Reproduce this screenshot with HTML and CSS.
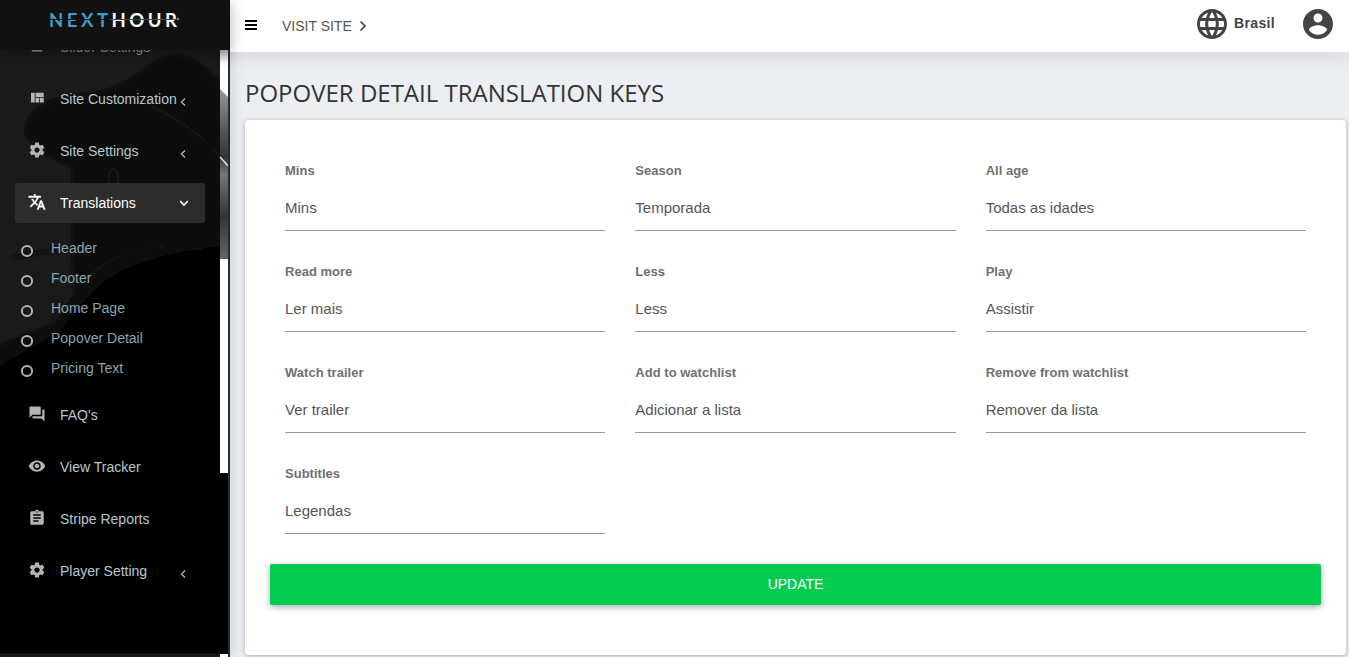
FILE: index.html
```html
<!DOCTYPE html>
<html lang="en">
<head>
<meta charset="utf-8">
<title>Popover Detail Translation Keys</title>
<link rel="stylesheet" href="styles.css">
</head>
<body>
<svg width="0" height="0" class="sprite">
  <symbol id="gear" viewBox="0 0 24 24"><path d="M19.43 12.98c.04-.32.07-.64.07-.98s-.03-.66-.07-.98l2.11-1.65c.19-.15.24-.42.12-.64l-2-3.46c-.12-.22-.39-.3-.61-.22l-2.49 1c-.52-.4-1.08-.73-1.69-.98l-.38-2.65C14.46 2.18 14.25 2 14 2h-4c-.25 0-.46.18-.49.42l-.38 2.65c-.61.25-1.17.59-1.69.98l-2.49-1c-.23-.09-.49 0-.61.22l-2 3.46c-.13.22-.07.49.12.64l2.11 1.65c-.04.32-.07.65-.07.98s.03.66.07.98l-2.11 1.65c-.19.15-.24.42-.12.64l2 3.46c.12.22.39.3.61.22l2.49-1c.52.4 1.08.73 1.69.98l.38 2.65c.03.24.24.42.49.42h4c.25 0 .46-.18.49-.42l.38-2.65c.61-.25 1.17-.59 1.69-.98l2.49 1c.23.09.49 0 .61-.22l2-3.46c.12-.22.07-.49-.12-.64l-2.11-1.65zM12 15.5c-1.93 0-3.5-1.57-3.5-3.5s1.57-3.5 3.5-3.5 3.5 1.57 3.5 3.5-1.57 3.5-3.5 3.5z"/></symbol>
  <symbol id="quilt" viewBox="0 0 24 24"><path d="M10 18h5v-6h-5v6zm-6 0h5V5H4v13zm12 0h5v-6h-5v6zM10 5v6h11V5H10z"/></symbol>
  <symbol id="translate" viewBox="0 0 24 24"><path d="M12.87 15.07l-2.54-2.51.03-.03c1.74-1.94 2.98-4.17 3.71-6.53H17V4h-7V2H8v2H1v1.99h11.17C11.5 7.92 10.44 9.75 9 11.35 8.07 10.32 7.3 9.19 6.69 8h-2c.73 1.63 1.73 3.17 2.98 4.56l-5.09 5.02L4 19l5-5 3.11 3.11.76-2.04zM18.5 10h-2L12 22h2l1.12-3h4.75L21 22h2l-4.5-12zm-2.62 7l1.62-4.33L19.12 17h-3.24z"/></symbol>
  <symbol id="forum" viewBox="0 0 24 24"><path d="M21 6h-2v9H6v2c0 .55.45 1 1 1h11l4 4V7c0-.55-.45-1-1-1zm-4 6V3c0-.55-.45-1-1-1H3c-.55 0-1 .45-1 1v14l4-4h10c.55 0 1-.45 1-1z"/></symbol>
  <symbol id="eye" viewBox="0 0 24 24"><path d="M12 4.5C7 4.5 2.73 7.61 1 12c1.73 4.39 6 7.5 11 7.5s9.27-3.11 11-7.5c-1.73-4.39-6-7.5-11-7.5zM12 17c-2.76 0-5-2.24-5-5s2.24-5 5-5 5 2.24 5 5-2.24 5-5 5zm0-8c-1.66 0-3 1.34-3 3s1.34 3 3 3 3-1.34 3-3-1.34-3-3-3z"/></symbol>
  <symbol id="clipboard" viewBox="0 0 24 24"><path d="M19 3h-4.180C14.400 1.840 13.300 1 12 1c-1.300 0-2.400.84-2.820 2H5c-1.100 0-2 .9-2 2v14c0 1.100.9 2 2 2h14c1.100 0 2-.9 2-2V5c0-1.100-.9-2-2-2zm-7 0c.55 0 1 .45 1 1s-.45 1-1 1-1-.45-1-1 .45-1 1-1zm2 14H7v-2h7v2zm3-4H7v-2h10v2zm0-4H7V7h10v2z"/></symbol>
  <symbol id="slider" viewBox="0 0 24 24"><path d="M5 4h14v15.500H5z"/></symbol>
  <symbol id="ring" viewBox="0 0 14 14"><circle cx="7" cy="7" r="5.100" fill="none" stroke="currentColor" stroke-width="2"/></symbol>
  <symbol id="left" viewBox="0 0 6 10"><path d="M5 1.500 1.500 5 5 8.500" fill="none" stroke="currentColor" stroke-width="1.300"/></symbol>
  <symbol id="down" viewBox="0 0 10 7"><path d="M1.200 1.200 5 5l3.800-3.800" fill="none" stroke="currentColor" stroke-width="1.700"/></symbol>
</svg>
<div class="app">
  <aside class="sidebar">
    <svg class="backdrop" viewBox="0 0 228 657" aria-hidden="true">
      <defs>
        <linearGradient id="strip" x2="0" y2="1"><stop offset="0" stop-color="#bbb"/><stop offset=".06" stop-color="#fff"/><stop offset="1" stop-color="#fff"/></linearGradient>
        <linearGradient id="photo" x2="0" y2="1"><stop offset="0" stop-color="#999"/><stop offset=".25" stop-color="#555"/><stop offset=".4" stop-color="#333"/><stop offset=".5" stop-color="#777"/><stop offset=".75" stop-color="#333"/><stop offset="1" stop-color="#666"/></linearGradient>
        <filter id="soft"><feGaussianBlur stdDeviation="1.500"/></filter>
      </defs>
      <path fill="#1a1a1a" d="M0 0h228v657H0z"/>
      <g filter="url(#soft)">
        <path fill="#070707" d="M25 132c2-24 26-36 60-38 26-2 45-14 65-29 20-13 36-13 51 0l40 34v570H-10V349l64-26 24-33 12-25-10-45-8-52c-22-12-44-22-47-36z"/>
        <path fill="#0f0d0c" d="M72 168l38-8 10 60-6 60-40 25-2-40z"/>
        <path fill="#020202" d="M-10 372l70-40 34-42c20-20 70-40 140-44v420H-10z"/>
        <path fill="none" stroke="#181818" stroke-width="1.500" d="M53 323c18-38 52-68 95-75 20-4 35-3 55 0"/>
        <path fill="none" stroke="#262626" d="M150 106c30 13 52 30 70 51"/>
        <path fill="none" stroke="#0a0a0a" stroke-width="3" d="M12 258l30-6 24-2"/>
      </g>
      <path fill="none" stroke="#1c1c1c" stroke-width="1.500" d="M109 183c-1-17 8-18 9-6 0 12-3 22-8 25"/>
      <path fill="#000" d="M0 392h228v262H0z"/>
      <path fill="#1a1a1a" d="M0 653.500h220v3.500H0z"/>
      <path fill="url(#strip)" d="M220 50h8v209h-8z"/>
      <path fill="url(#photo)" d="M220 89l8 8v162h-8z"/>
      <path stroke="#ddd" stroke-width="1.500" d="M220 157l8 9"/>
      <path fill="#fff" d="M220 259h8v214h-8zM220 654h8v3h-8z"/>
    </svg>
    <div class="brand">
      <svg width="134" height="26" viewBox="0 0 134 26">
        <text x="-1" y="19" textLength="128" class="logo"><tspan fill="#3c9dca">NEXT</tspan><tspan fill="#fff">HOUR</tspan></text>
        <path d="M0 11.500h60" stroke="#111"/>
        <path d="M60 11.500h67" stroke="#444"/>
        <path d="M127 9.500l3 1.500-3 1.500z" fill="#3c9dca"/>
      </svg>
    </div>
    <nav class="nav">
      <div class="item clipped"><svg><use href="#slider"/></svg><span>Slider Settings</span></div>
      <div class="item"><svg><use href="#quilt"/></svg><span>Site Customization</span><svg class="left"><use href="#left"/></svg></div>
      <div class="item"><svg><use href="#gear"/></svg><span>Site Settings</span><svg class="left"><use href="#left"/></svg></div>
      <div class="item active"><svg class="bold"><use href="#translate"/></svg><span>Translations</span><svg class="down"><use href="#down"/></svg></div>
      <div class="sub">
        <div><svg><use href="#ring"/></svg>Header</div>
        <div><svg><use href="#ring"/></svg>Footer</div>
        <div><svg><use href="#ring"/></svg>Home Page</div>
        <div><svg><use href="#ring"/></svg>Popover Detail</div>
        <div><svg><use href="#ring"/></svg>Pricing Text</div>
      </div>
      <div class="item"><svg><use href="#forum"/></svg><span>FAQ's</span></div>
      <div class="item"><svg><use href="#eye"/></svg><span>View Tracker</span></div>
      <div class="item"><svg><use href="#clipboard"/></svg><span>Stripe Reports</span></div>
      <div class="item"><svg><use href="#gear"/></svg><span>Player Setting</span><svg class="left"><use href="#left"/></svg></div>
    </nav>
  </aside>
  <div class="page">
    <header class="topbar">
      <svg class="menu" width="12" height="10" viewBox="0 0 12 10"><path d="M0 0h12v2H0zM0 4h12v2H0zM0 8h12v2H0z"/></svg>
      <span class="visit">VISIT SITE</span>
      <svg class="go" width="8" height="12" viewBox="0 0 8 12"><path d="M1.500 1.500 6 6l-4.500 4.500" fill="none" stroke="#444" stroke-width="1.700"/></svg>
      <svg class="globe" width="36" height="36" viewBox="0 0 24 24"><path d="M11.990 2C6.470 2 2 6.480 2 12s4.470 10 9.990 10C17.520 22 22 17.520 22 12S17.520 2 11.990 2zm6.930 6h-2.950c-.32-1.250-.78-2.450-1.380-3.560 1.840.63 3.370 1.910 4.330 3.560zM12 4.040c.83 1.200 1.480 2.530 1.910 3.960h-3.820c.43-1.430 1.080-2.760 1.910-3.960zM4.260 14C4.100 13.360 4 12.690 4 12s.1-1.360.26-2h3.380c-.08.66-.14 1.320-.14 2s.06 1.340.14 2H4.260zm.82 2h2.950c.32 1.250.78 2.450 1.380 3.560-1.840-.63-3.370-1.900-4.330-3.560zm2.950-8H5.080c.96-1.660 2.490-2.930 4.330-3.560C8.810 5.550 8.350 6.750 8.030 8zM12 19.960c-.83-1.200-1.480-2.530-1.910-3.960h3.820c-.43 1.430-1.080 2.760-1.910 3.960zM14.340 14H9.660c-.09-.66-.16-1.320-.16-2s.07-1.350.16-2h4.680c.09.65.16 1.320.16 2s-.07 1.340-.16 2zm.25 5.560c.6-1.110 1.060-2.310 1.380-3.560h2.950c-.96 1.650-2.490 2.930-4.330 3.560zM16.360 14c.08-.66.14-1.320.14-2s-.06-1.340-.14-2h3.380c.16.64.26 1.310.26 2s-.1 1.360-.26 2h-3.380z"/></svg>
      <span class="lang">Brasil</span>
      <svg class="user" width="36" height="36" viewBox="0 0 24 24"><path d="M12 2C6.480 2 2 6.480 2 12s4.480 10 10 10 10-4.480 10-10S17.520 2 12 2zm0 3c1.660 0 3 1.340 3 3s-1.340 3-3 3-3-1.340-3-3 1.340-3 3-3zm0 14.200c-2.500 0-4.710-1.280-6-3.220.03-1.990 4-3.080 6-3.080 1.990 0 5.970 1.090 6 3.080-1.290 1.940-3.500 3.220-6 3.220z"/></svg>
    </header>
    <main class="content">
      <h1>POPOVER DETAIL TRANSLATION KEYS</h1>
      <section class="card">
        <div class="fields">
          <div class="field"><label>Mins</label><p>Mins</p></div>
          <div class="field"><label>Season</label><p>Temporada</p></div>
          <div class="field"><label>All age</label><p>Todas as idades</p></div>
          <div class="field"><label>Read more</label><p>Ler mais</p></div>
          <div class="field"><label>Less</label><p>Less</p></div>
          <div class="field"><label>Play</label><p>Assistir</p></div>
          <div class="field"><label>Watch trailer</label><p>Ver trailer</p></div>
          <div class="field"><label>Add to watchlist</label><p>Adicionar a lista</p></div>
          <div class="field"><label>Remove from watchlist</label><p>Remover da lista</p></div>
          <div class="field"><label>Subtitles</label><p>Legendas</p></div>
        </div>
        <button class="update">UPDATE</button>
      </section>
    </main>
  </div>
</div>
</body>
</html>
```

FILE: styles.css
```css
* { box-sizing: border-box; }
body { margin: 0; font-family: "Liberation Sans", Arial, sans-serif; font-size: 14px; overflow: hidden; }
.sprite { position: absolute; }
.app { display: flex; height: 657px; background: #ebeef3; }

.sidebar { position: relative; width: 230px; flex: none; display: flex; flex-direction: column; background: #000; border-right: 2px solid #222d32; box-shadow: 0 0 14px rgba(0, 0, 0, .16); }
.backdrop { position: absolute; left: 0; top: 0; width: 228px; height: 657px; }
.brand { position: relative; z-index: 2; height: 50px; width: 230px; flex: none; padding: 8px 0 0 50px; background: #111; box-shadow: 0 4px 14px rgba(0, 0, 0, .3); }
.brand svg { display: block; overflow: visible; }
.logo { font: 700 18.5px Lato, sans-serif; }

.nav { position: relative; flex: 1; min-height: 0; width: 220px; padding: 0 15px; overflow: hidden; }
.item { display: flex; align-items: center; width: 190px; height: 40px; margin-bottom: 12px; padding-left: 13px; border-radius: 3px; color: #b8c7ce; }
.item svg { width: 18px; height: 18px; margin: -2px 14px 0 0; fill: #b3b3b3; flex: none; }
.item span { white-space: nowrap; }
.item.clipped { margin-top: -23px; opacity: .7; }
.item.active { background: #2c2c2c; color: #fff; }
.item.active svg { fill: #fff; }
.item svg.bold { stroke: #fff; stroke-width: .6px; }
.item svg.left { width: 6px; height: 10px; margin: 6px 19px 0 auto; color: #b3b3b3; }
.item svg.down { width: 10px; height: 7px; margin: 0 16px 0 auto; color: #fff; fill: none; }
.sub { margin: -2px 0 12px; color: #8aa4af; }
.sub div { display: flex; align-items: center; height: 30px; padding-left: 5px; }
.sub svg { width: 14px; height: 14px; margin: 6px 17px 0 0; color: #b3b3b3; }

.page { flex: 1; min-width: 0; }
.topbar { position: relative; display: flex; align-items: center; height: 52px; padding: 0 13px 4px 15px; background: #fff; box-shadow: 0 2px 22px rgba(0, 0, 0, .13); }
.menu { margin-top: 2px; }
.visit { margin: 4px 0 0 25px; color: #555; }
.go { margin: 4px 0 0 7px; }
.globe { margin-left: auto; }
.globe, .user { fill: #444; }
.lang { margin: -2px 25px 0 4px; font-weight: 700; letter-spacing: .35px; color: #444; }

.content { padding: 0 3px 0 15px; }
h1 { height: 68px; margin: 0; padding-top: 24px; font: 400 24px/33px "Open Sans", sans-serif; color: #333; }
.card { height: 535px; padding: 40px 25px 0; border-radius: 4px; background: #fff; box-shadow: 0 1px 5px rgba(0, 0, 0, .28); }
.fields { display: grid; grid-template-columns: repeat(3, 1fr); column-gap: 30px; row-gap: 30px; padding: 0 15px; }
.field { height: 71px; border-bottom: 1px solid #999; }
.field label { display: block; height: 20px; font-size: 13px; line-height: 21px; font-weight: 700; letter-spacing: .02px; color: #707070; }
.field p { margin: 17px 0 0; font-size: 15px; line-height: 22px; color: #555; }
.update { display: block; width: 100%; height: 41px; margin-top: 30px; padding: 0 0 2px; border: 0; border-radius: 2px; background: #02cb52; color: #fff; font: 14px "Liberation Sans", Arial, sans-serif; box-shadow: 0 2px 6px rgba(0, 0, 0, .35); }
```
